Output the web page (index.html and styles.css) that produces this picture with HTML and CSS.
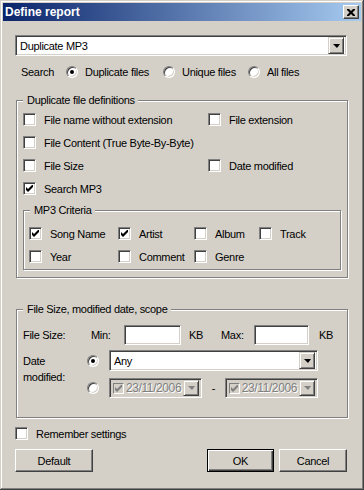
FILE: index.html
```
<!DOCTYPE html>
<html lang="en">
<head>
  <meta charset="UTF-8" />
  <title>Define report</title>
  <link rel="stylesheet" href="styles.css">
</head>
<body>

  <div class="win">
    <!-- Title bar -->
    <div class="title">
      <span class="title-text">Define report</span>
      <span class="close">
        <svg width="8" height="7" viewBox="0 0 8 7"><path d="M0 0h2l2 2 2-2h2v1l-2.5 2.5L8 6v1H6L4 5 2 7H0V6l2.5-2.5L0 1z" fill="#000"/></svg>
      </span>
    </div>

    <div class="body">
      <!-- Report type -->
      <div class="combo report-combo">
        <span class="combo-text">Duplicate MP3</span>
        <span class="drop"><i class="arrow"></i></span>
      </div>

      <div class="search-row">
        <span class="search-label">Search</span>
        <label class="opt w97"><span class="radio on"></span>Duplicate files</label>
        <label class="opt w85"><span class="radio"></span>Unique files</label>
        <label class="opt"><span class="radio"></span>All files</label>
      </div>

      <!-- Duplicate file definitions -->
      <div class="group defs">
        <span class="legend">Duplicate file definitions</span>
        <div class="defs-grid">
          <label class="cb"><span class="check"></span>File name without extension</label>
          <label class="cb"><span class="check"></span>File extension</label>
          <label class="cb"><span class="check"></span>File Content (True Byte-By-Byte)</label>
          <span></span>
          <label class="cb"><span class="check"></span>File Size</label>
          <label class="cb"><span class="check"></span>Date modified</label>
          <label class="cb"><span class="check on"><svg width="7" height="7" viewBox="0 0 7 7"><polygon points="0,2 2,4 7,-1 7,2 2,7 0,5" fill="#000"/></svg></span>Search MP3</label>
          <span></span>
        </div>

        <div class="group mp3">
          <span class="legend">MP3 Criteria</span>
          <div class="mp3-grid">
            <label class="cb"><span class="check on"><svg width="7" height="7" viewBox="0 0 7 7"><polygon points="0,2 2,4 7,-1 7,2 2,7 0,5" fill="#000"/></svg></span>Song Name</label>
            <label class="cb"><span class="check on"><svg width="7" height="7" viewBox="0 0 7 7"><polygon points="0,2 2,4 7,-1 7,2 2,7 0,5" fill="#000"/></svg></span>Artist</label>
            <label class="cb"><span class="check"></span>Album</label>
            <label class="cb"><span class="check"></span>Track</label>
            <label class="cb"><span class="check"></span>Year</label>
            <label class="cb"><span class="check"></span>Comment</label>
            <label class="cb"><span class="check"></span>Genre</label>
          </div>
        </div>
      </div>

      <!-- File size / date -->
      <div class="group scope">
        <span class="legend">File Size, modified date, scope</span>
        <div class="size-row">
          <span class="w68">File Size:</span>
          <span class="w33">Min:</span>
          <span class="field min"></span>
          <span class="kb w32">KB</span>
          <span class="w33">Max:</span>
          <span class="field max"></span>
          <span class="kb2">KB</span>
        </div>
        <div class="date-block">
          <span class="date-label">Date<br>modified:</span>
          <span class="radio on"></span>
          <div class="combo any-combo">
            <span class="combo-text">Any</span>
            <span class="drop"><i class="arrow"></i></span>
          </div>
          <span class="radio"></span>
          <div class="range">
            <div class="picker">
              <span class="mini-check"><svg width="7" height="7" viewBox="0 0 7 7"><polygon points="0,2 2,4 7,-1 7,2 2,7 0,5" fill="#808080"/></svg></span>
              <span class="picker-text">23/11/2006</span>
              <span class="drop off"><i class="arrow"></i></span>
            </div>
            <span class="dash">-</span>
            <div class="picker">
              <span class="mini-check"><svg width="7" height="7" viewBox="0 0 7 7"><polygon points="0,2 2,4 7,-1 7,2 2,7 0,5" fill="#808080"/></svg></span>
              <span class="picker-text">23/11/2006</span>
              <span class="drop off"><i class="arrow"></i></span>
            </div>
          </div>
        </div>
      </div>

      <label class="cb remember"><span class="check"></span>Remember settings</label>

      <div class="buttons">
        <button class="btn default-btn">Default</button>
        <span class="spacer"></span>
        <button class="btn ok">OK</button>
        <button class="btn cancel">Cancel</button>
      </div>
    </div>
  </div>

</body>
</html>
```

FILE: styles.css
```
body {
  margin: 0;
  font-family: "Liberation Sans", Arial, sans-serif;
  font-size: 11px;
  letter-spacing: -0.3px;
  color: #000;
  background: #d4d0c8;
}

.win {
  width: 364px;
  height: 490px;
  box-sizing: border-box;
  padding: 3px;
  background: #d4d0c8;
  box-shadow: inset -1px -1px #404040, inset 1px 1px #d4d0c8, inset -2px -2px #808080, inset 2px 2px #fff;
}

/* title bar */
.title {
  height: 18px;
  display: flex;
  align-items: center;
  justify-content: space-between;
  padding: 0 2px 0 2px;
  background: linear-gradient(to right, #0a246a, #a6caf0);
}

.title-text {
  color: #fff;
  font-weight: bold;
  font-size: 12px;
  letter-spacing: 0;
}

.close {
  width: 16px;
  height: 14px;
  box-sizing: border-box;
  display: flex;
  align-items: center;
  justify-content: center;
  background: #d4d0c8;
  border: 1px solid;
  border-color: #fff #404040 #404040 #fff;
  box-shadow: inset -1px -1px #808080;
}

.body {
  padding: 14px 12px 0 12px;
}

/* combo boxes */
.combo {
  height: 21px;
  box-sizing: border-box;
  display: flex;
  align-items: center;
  background: #fff;
  border: 1px solid;
  border-color: #808080 #fff #fff #808080;
  box-shadow: inset 1px 1px #404040, inset -1px -1px #d4d0c8;
  padding: 2px;
}

.report-combo {
  width: 332px;
}

.combo-text {
  flex: 1;
  padding-left: 2px;
}

.drop {
  width: 16px;
  height: 17px;
  box-sizing: border-box;
  display: flex;
  align-items: center;
  justify-content: center;
  background: #d4d0c8;
  border: 1px solid;
  border-color: #d4d0c8 #404040 #404040 #d4d0c8;
  box-shadow: inset 1px 1px #fff, inset -1px -1px #808080;
  flex: none;
}

.arrow {
  width: 0;
  height: 0;
  border-top: 4px solid #000;
  border-left: 4px solid transparent;
  border-right: 3px solid transparent;
}

.drop.off .arrow {
  border-top-color: #808080;
}

/* search row */
.search-row {
  margin-top: 8px;
  height: 16px;
  display: flex;
  align-items: center;
  padding-left: 6px;
}

.search-label {
  width: 45px;
}

.opt {
  display: flex;
  align-items: center;
  gap: 7px;
}

.w97 { width: 97px; }
.w85 { width: 85px; }

.radio {
  width: 12px;
  height: 12px;
  box-sizing: border-box;
  border-radius: 50%;
  background: #fff;
  border: 1px solid;
  border-color: #808080 #fff #fff #808080;
  box-shadow: inset 1px 1px #404040, inset -1px -1px #d4d0c8;
  display: flex;
  align-items: center;
  justify-content: center;
  flex: none;
}

.radio.on::after {
  content: "";
  width: 4px;
  height: 4px;
  border-radius: 50%;
  background: #000;
}

/* group boxes */
.group {
  position: relative;
  border: 1px solid #808080;
  box-shadow: inset 1px 1px #fff, 1px 1px #fff;
}

.legend {
  position: absolute;
  top: -7px;
  left: 6px;
  padding: 0 3px 0 4px;
  line-height: 13px;
  background: #d4d0c8;
}

.defs {
  margin: 20px 0 0 1px;
  width: 332px;
  box-sizing: border-box;
  padding: 7px 6px 7px 6px;
}

.defs-grid {
  display: grid;
  grid-template-columns: 185px auto;
  grid-auto-rows: 23px;
}

.cb {
  display: flex;
  align-items: center;
  gap: 8px;
}

.check {
  width: 13px;
  height: 13px;
  box-sizing: border-box;
  background: #fff;
  border: 1px solid;
  border-color: #808080 #fff #fff #808080;
  box-shadow: inset 1px 1px #404040, inset -1px -1px #d4d0c8;
  display: flex;
  align-items: center;
  justify-content: center;
  flex: none;
}

.mp3 {
  margin-top: 10px;
  padding: 11px 0 1px 5px;
}

.mp3 .legend {
  left: 6px;
}

.mp3-grid {
  display: grid;
  grid-template-columns: 89px 76px 65px auto;
  grid-auto-rows: 23px;
}

/* scope group */
.scope {
  margin: 31px 0 0 1px;
  width: 332px;
  box-sizing: border-box;
  padding: 15px 6px 19px 6px;
}

.size-row {
  height: 20px;
  display: flex;
  align-items: center;
}

.w68 { width: 68px; }
.w33 { width: 33px; }
.w32 { width: 32px; }

.field {
  height: 20px;
  box-sizing: border-box;
  background: #fff;
  border: 1px solid;
  border-color: #808080 #fff #fff #808080;
  box-shadow: inset 1px 1px #404040, inset -1px -1px #d4d0c8;
}

.field.min { width: 57px; }
.field.max { width: 55px; }

.kb { margin-left: 8px; }
.kb2 { margin-left: 10px; }

.date-block {
  margin-top: 5px;
  display: grid;
  grid-template-columns: 64px 22px 209px;
  grid-template-rows: 21px 20px;
  row-gap: 7px;
  align-items: center;
}

.date-label {
  grid-row: 1 / 3;
  align-self: start;
  padding-top: 3px;
  line-height: 16px;
}

.any-combo {
  width: 209px;
}

.range {
  display: flex;
  align-items: center;
}

.picker {
  width: 95px;
  height: 20px;
  box-sizing: border-box;
  display: flex;
  align-items: center;
  padding: 2px;
  background: #d4d0c8;
  border: 1px solid;
  border-color: #808080 #fff #fff #808080;
  box-shadow: inset 1px 1px #404040, inset -1px -1px #d4d0c8;
}

.picker .drop {
  height: 16px;
}

.mini-check {
  width: 11px;
  height: 11px;
  box-sizing: border-box;
  margin-left: 1px;
  border: 1px solid;
  border-color: #808080 #fff #fff #808080;
  display: flex;
  align-items: center;
  justify-content: center;
  flex: none;
}

.picker-text {
  flex: 1;
  padding-left: 2px;
  font-size: 12px;
  letter-spacing: -0.4px;
  white-space: nowrap;
  overflow: hidden;
  color: #808080;
  text-shadow: 1px 1px #fff;
}

.dash {
  width: 23px;
  text-align: center;
}

/* bottom */
.remember {
  margin-top: 9px;
  height: 13px;
}

.buttons {
  margin-top: 9px;
  display: flex;
}

.spacer {
  flex: 1;
}

.btn {
  height: 23px;
  box-sizing: border-box;
  padding: 0;
  font-family: inherit;
  font-size: 11px;
  letter-spacing: -0.3px;
  color: #000;
  background: #d4d0c8;
  border: 1px solid;
  border-color: #fff #404040 #404040 #fff;
  box-shadow: inset -1px -1px #808080;
}

.default-btn { width: 78px; }

.ok {
  width: 67px;
  border-color: #000;
  box-shadow: inset 1px 1px #fff, inset -1px -1px #404040, inset -2px -2px #808080;
}

.cancel {
  width: 68px;
  margin-left: 5px;
  margin-right: 2px;
}
```
